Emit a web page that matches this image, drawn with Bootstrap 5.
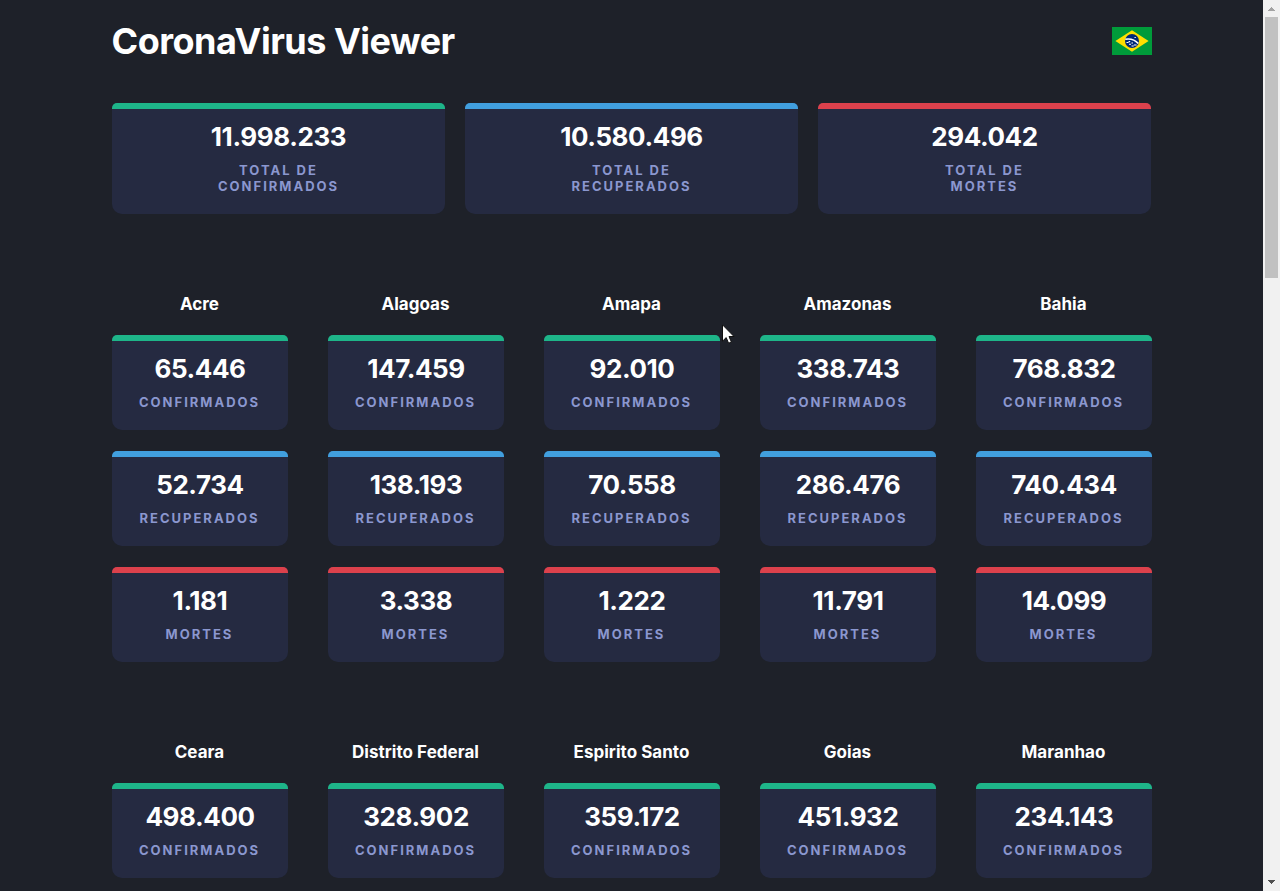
<!DOCTYPE html>
<html lang="pt-BR">
<head>
<meta charset="utf-8">
<title>CoronaVirus Viewer</title>
<meta name="viewport" content="width=device-width, initial-scale=1">
<link href="https://cdn.jsdelivr.net/npm/bootstrap@5.3.0/dist/css/bootstrap.min.css" rel="stylesheet">
<style>
  body { background: #1e2129; color: #fff; font-family: Inter, "Liberation Sans", sans-serif; font-weight: 700; }
  .viewport { height: 891px; }
  .page { width: 1040px; margin-left: 112px; }
  .top { height: 82px; }
  .title { font-size: 36px; line-height: 44px; font-weight: 700; letter-spacing: -.5px; text-indent: -.5px; }
  .totals { display: grid; grid-template-columns: repeat(3, 333px); column-gap: 20px; margin-top: 21px; }
  .states { display: grid; grid-template-columns: repeat(5, 176px); column-gap: 40px; margin-top: 79px; }
  .state-name { font-size: 17px; line-height: 22px; margin: 0 1px 20px 0; font-weight: 700; white-space: nowrap; letter-spacing: .03px; }
  .stat { height: 95px; border-radius: 5px 5px 10px 10px; background: #252a41; overflow: hidden; margin-bottom: 21px; }
  .stat::before { content: ""; display: block; height: 6px; background: var(--tone); }
  .totals .stat { height: 111px; margin-bottom: 0; }
  .green { --tone: #1eb589; }
  .blue { --tone: #419fde; }
  .red { --tone: #dc414c; }
  .num { font-size: 26px; line-height: 32px; padding-top: 12px; letter-spacing: -.42px; }
  .lab { font-size: 13px; line-height: 16px; letter-spacing: 2px; color: #8b97cf; margin-top: 9px; }
  .states .lab { margin-right: 1px; }
  .scroll { width: 17px; background: #f1f1f1; }
  .thumb { width: 13px; height: 261px; background: #c1c1c1; }
  .pointer { left: 722px; top: 324px; }
</style>
</head>
<body class="overflow-hidden">
<div class="viewport d-flex justify-content-between overflow-hidden position-relative">
  <main class="page text-center">
    <header class="top d-flex justify-content-between align-items-center">
      <h1 class="title m-0">CoronaVirus Viewer</h1>
      <svg width="40" height="28" viewBox="0 0 40 28" role="img" aria-label="Brasil">
        <path fill="#009b3a" d="M0 0h40v28H0z"/>
        <path fill="#fedf00" d="M20 3.3 36.6 14 20 24.7 3.4 14z"/>
        <circle cx="20" cy="14" r="7" fill="#002776"/>
        <path d="M13.3 12.2c5-.8 10 .9 13 4.3" fill="none" stroke="#fff" stroke-width="1.6"/>
        <path d="M14.5 15.5h2M17 17.2h2M19.4 16h1.6M21.8 18h2.8M19.5 19h2.2M22.5 10.5h1.3M16.6 14.6h1.6" stroke="#fff" stroke-width="1.1"/>
      </svg>
    </header>

    <section class="totals">
      <div class="stat green"><div class="num">11.998.233</div><div class="lab">TOTAL DE<br>CONFIRMADOS</div></div>
      <div class="stat blue"><div class="num">10.580.496</div><div class="lab">TOTAL DE<br>RECUPERADOS</div></div>
      <div class="stat red"><div class="num">294.042</div><div class="lab">TOTAL DE<br>MORTES</div></div>
    </section>

    <section class="states">
      <div>
        <h2 class="state-name">Acre</h2>
        <div class="stat green"><div class="num">65.446</div><div class="lab">CONFIRMADOS</div></div>
        <div class="stat blue"><div class="num">52.734</div><div class="lab">RECUPERADOS</div></div>
        <div class="stat red mb-0"><div class="num">1.181</div><div class="lab">MORTES</div></div>
      </div>
      <div>
        <h2 class="state-name">Alagoas</h2>
        <div class="stat green"><div class="num">147.459</div><div class="lab">CONFIRMADOS</div></div>
        <div class="stat blue"><div class="num">138.193</div><div class="lab">RECUPERADOS</div></div>
        <div class="stat red mb-0"><div class="num">3.338</div><div class="lab">MORTES</div></div>
      </div>
      <div>
        <h2 class="state-name">Amapa</h2>
        <div class="stat green"><div class="num">92.010</div><div class="lab">CONFIRMADOS</div></div>
        <div class="stat blue"><div class="num">70.558</div><div class="lab">RECUPERADOS</div></div>
        <div class="stat red mb-0"><div class="num">1.222</div><div class="lab">MORTES</div></div>
      </div>
      <div>
        <h2 class="state-name">Amazonas</h2>
        <div class="stat green"><div class="num">338.743</div><div class="lab">CONFIRMADOS</div></div>
        <div class="stat blue"><div class="num">286.476</div><div class="lab">RECUPERADOS</div></div>
        <div class="stat red mb-0"><div class="num">11.791</div><div class="lab">MORTES</div></div>
      </div>
      <div>
        <h2 class="state-name">Bahia</h2>
        <div class="stat green"><div class="num">768.832</div><div class="lab">CONFIRMADOS</div></div>
        <div class="stat blue"><div class="num">740.434</div><div class="lab">RECUPERADOS</div></div>
        <div class="stat red mb-0"><div class="num">14.099</div><div class="lab">MORTES</div></div>
      </div>
    </section>

    <section class="states">
      <div>
        <h2 class="state-name">Ceara</h2>
        <div class="stat green"><div class="num">498.400</div><div class="lab">CONFIRMADOS</div></div>
      </div>
      <div>
        <h2 class="state-name">Distrito Federal</h2>
        <div class="stat green"><div class="num">328.902</div><div class="lab">CONFIRMADOS</div></div>
      </div>
      <div>
        <h2 class="state-name">Espirito Santo</h2>
        <div class="stat green"><div class="num">359.172</div><div class="lab">CONFIRMADOS</div></div>
      </div>
      <div>
        <h2 class="state-name">Goias</h2>
        <div class="stat green"><div class="num">451.932</div><div class="lab">CONFIRMADOS</div></div>
      </div>
      <div>
        <h2 class="state-name">Maranhao</h2>
        <div class="stat green"><div class="num">234.143</div><div class="lab">CONFIRMADOS</div></div>
      </div>
    </section>
  </main>

  <aside class="scroll d-flex flex-column align-items-center">
    <svg width="17" height="17" shape-rendering="crispEdges"><path fill="#a3a3a3" d="M8 7h1v1h1v1h1v1h1v1H5v-1h1V9h1V8h1z"/></svg>
    <div class="thumb"></div>
    <svg class="mt-auto" width="17" height="17" shape-rendering="crispEdges"><path fill="#505050" d="M5 6h7v1h-1v1h-1v1H9v1H8V9H7V8H6V7H5z"/></svg>
  </aside>

  <svg class="pointer position-absolute" width="13" height="20" viewBox="0 0 13 20"><path d="M.5.8v16.4l3.7-3.6 2.4 5.6 2.8-1.2-2.4-5.5h5z" fill="#fff" stroke="#111" stroke-width="1"/></svg>
</div>
<script src="https://cdn.jsdelivr.net/npm/bootstrap@5.3.0/dist/js/bootstrap.bundle.min.js"></script>
</body>
</html>
